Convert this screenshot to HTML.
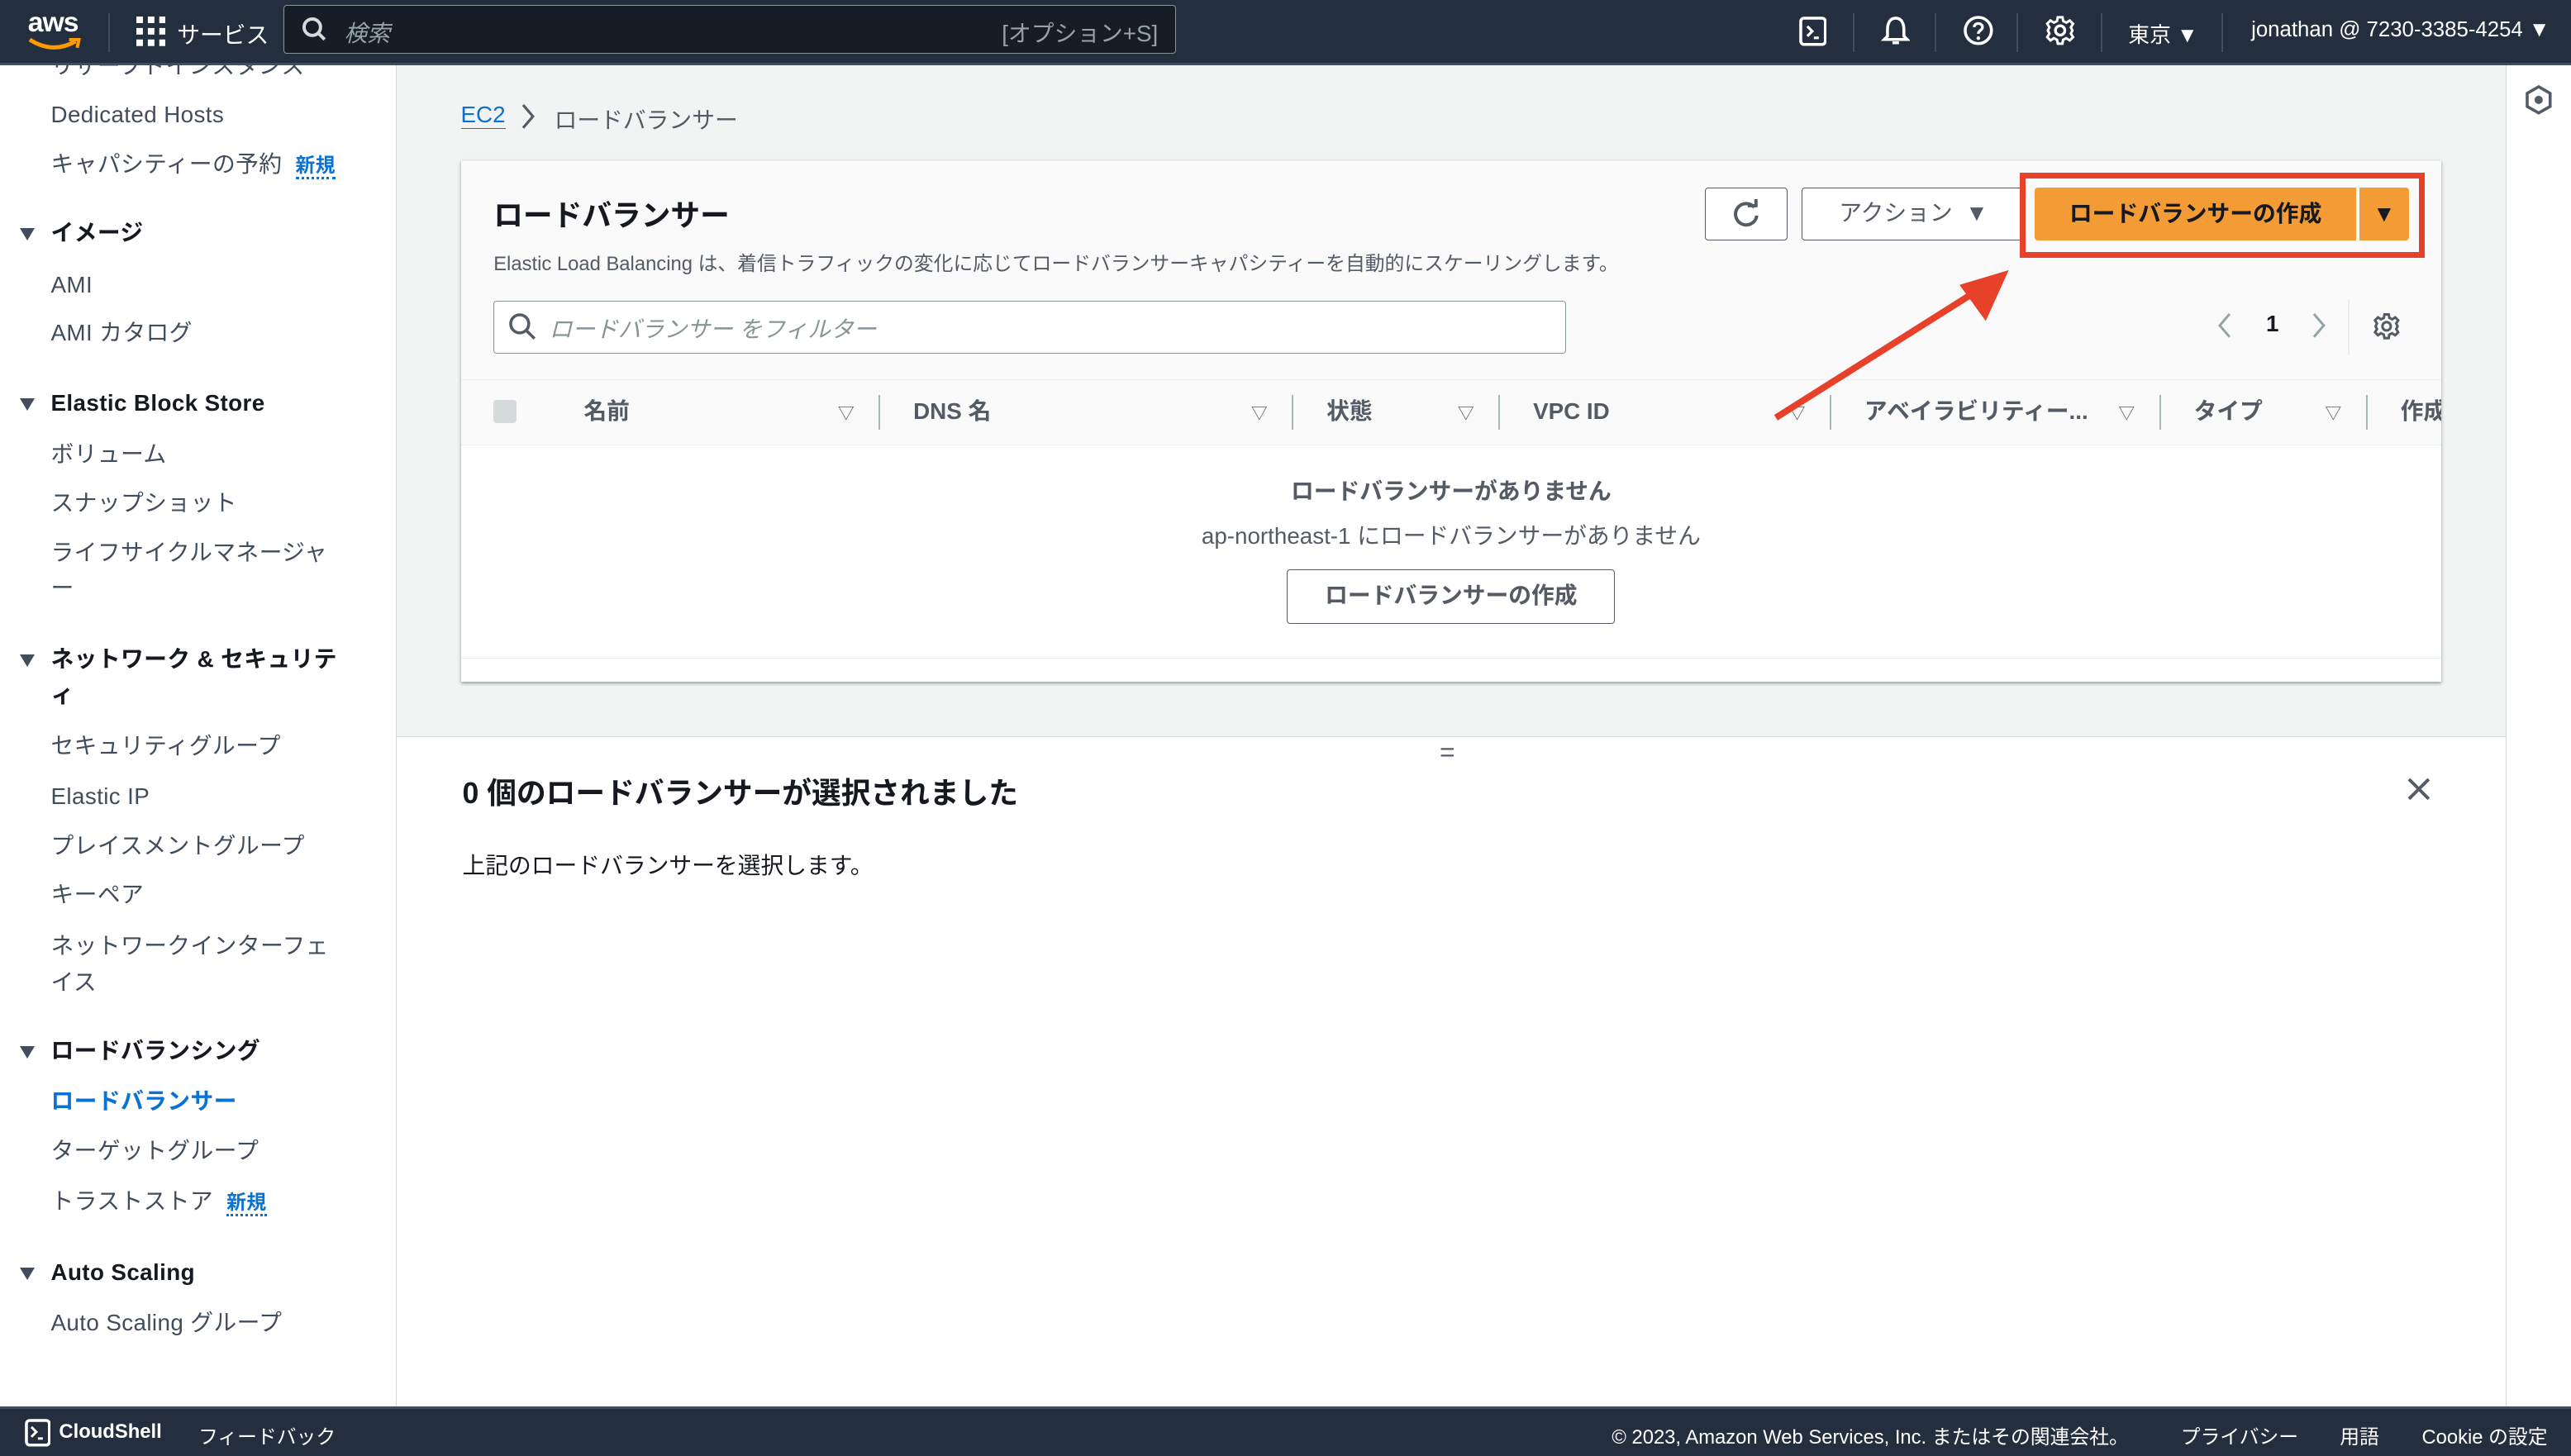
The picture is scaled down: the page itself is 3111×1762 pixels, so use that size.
<!DOCTYPE html>
<html><head><meta charset="utf-8">
<style>
html{zoom:1.98406}
*{box-sizing:border-box;margin:0;padding:0}
body{width:1568px;height:888px;overflow:hidden;position:relative;background:#fff;font-family:"Liberation Sans","Noto Sans CJK JP",sans-serif;color:#414d5c;font-size:14px}
.a{position:absolute;white-space:nowrap}
#top{position:absolute;left:0;top:0;width:1568px;height:40px;background:#232f3e;border-bottom:2px solid #414d5c}
#side{position:absolute;left:0;top:40px;width:242px;height:818px;background:#fff;border-right:1px solid #d5dbdb;overflow:hidden}
#side .a{font-size:14px;color:#414d5c;letter-spacing:0.2px;line-height:20px}
#side .h{font-weight:bold;color:#16191f}
#side .h:before{content:"";position:absolute;left:-19px;top:7px;border-left:5px solid transparent;border-right:5px solid transparent;border-top:8px solid #414d5c}
.new{color:#0972d3;font-size:12px;font-weight:bold;border-bottom:2px dotted #0972d3}
#main{position:absolute;left:242px;top:40px;width:1286px;height:409px;background:#f2f3f3}
#rail{position:absolute;left:1528px;top:40px;width:40px;height:818px;background:#fff;border-left:1px solid #d5dbdb}
#card{position:absolute;left:281px;top:98px;width:1208px;height:318px;background:#fafafa;border-top:1px solid #eaeded;box-shadow:0 1px 2px rgba(0,28,36,.4);overflow:hidden}
#lower{position:absolute;left:242px;top:449px;width:1286px;height:409px;background:#fff;border-top:1px solid #d5dbdb}
#foot{position:absolute;left:0;top:858px;width:1568px;height:30px;background:#232f3e;border-top:2px solid #414d5c;color:#fff;font-size:12px}
.btn{position:absolute;border:1px solid #545b64;background:#fff;border-radius:2px;font-weight:bold;color:#545b64;font-size:14px;text-align:center}
.th{position:absolute;top:0;height:38px;line-height:38px;font-weight:bold;color:#545b64;font-size:14px}
.sep{position:absolute;top:9px;width:1px;height:21px;background:#aab7b8}
.tri{position:absolute;top:12px;font-size:10px;color:#545b64}
</style></head><body>

<div id="top">
 <div class="a" style="left:17px;top:4px;color:#fff;font-size:17px;font-weight:bold;letter-spacing:-0.5px">aws</div>
 <svg class="a" style="left:16px;top:22px" width="34" height="10" viewBox="0 0 34 10"><path d="M2 2 Q16 11 30 3" stroke="#f90" stroke-width="2.5" fill="none"/><path d="M26 2 L32 2 L31 7" stroke="#f90" stroke-width="2" fill="none"/></svg>
 <div class="a" style="left:66px;top:8px;width:1px;height:24px;background:#414d5c"></div>
 <svg class="a" style="left:83px;top:10px" width="18" height="18"><g fill="#fff"><rect x="0" y="0" width="4" height="4"/><rect x="7" y="0" width="4" height="4"/><rect x="14" y="0" width="4" height="4"/><rect x="0" y="7" width="4" height="4"/><rect x="7" y="7" width="4" height="4"/><rect x="14" y="7" width="4" height="4"/><rect x="0" y="14" width="4" height="4"/><rect x="7" y="14" width="4" height="4"/><rect x="14" y="14" width="4" height="4"/></g></svg>
 <div class="a" style="left:108px;top:10px;color:#fff;font-size:14px">サービス</div>
 <div class="a" style="left:173px;top:3px;width:544px;height:30px;background:#161d26;border:1px solid #879596;border-radius:2px"></div>
 <svg class="a" style="left:184px;top:10px" width="16" height="16"><circle cx="6.5" cy="6.5" r="5" stroke="#d5dbdb" stroke-width="2" fill="none"/><path d="M10 10 L14 14" stroke="#d5dbdb" stroke-width="2"/></svg>
 <div class="a" style="left:210px;top:9px;color:#95a5a6;font-size:14px;font-style:italic">検索</div>
 <div class="a" style="left:611px;top:9px;color:#95a5a6;font-size:14px">[オプション+S]</div>
 <svg class="a" style="left:1097px;top:10px" width="17" height="18"><rect x="1" y="1" width="15" height="16" rx="2" stroke="#fff" stroke-width="1.8" fill="none"/><path d="M5 6 L8 9 L5 12 M9 13 H12" stroke="#fff" stroke-width="1.6" fill="none"/></svg>
 <div class="a" style="left:1130px;top:8px;width:1px;height:24px;background:#414d5c"></div>
 <svg class="a" style="left:1147px;top:9px" width="18" height="20"><path d="M9 2 C5 2 4 6 4 9 L4 13 L2 15 H16 L14 13 L14 9 C14 6 13 2 9 2Z M7 17 H11" stroke="#fff" stroke-width="1.8" fill="none"/></svg>
 <div class="a" style="left:1180px;top:8px;width:1px;height:24px;background:#414d5c"></div>
 <svg class="a" style="left:1197px;top:9px" width="19" height="19"><circle cx="9.5" cy="9.5" r="8" stroke="#fff" stroke-width="1.8" fill="none"/><path d="M7 7.5 C7 4.5 12 4.5 12 7.5 C12 9.5 9.5 9.5 9.5 11.5" stroke="#fff" stroke-width="1.7" fill="none"/><circle cx="9.5" cy="14.2" r="1.1" fill="#fff"/></svg>
 <div class="a" style="left:1230px;top:8px;width:1px;height:24px;background:#414d5c"></div>
 <svg class="a" style="left:1247px;top:9px" width="19" height="19" viewBox="0 0 20 20"><circle cx="10" cy="10" r="3" stroke="#fff" stroke-width="1.8" fill="none"/><path d="M8.5 1.5h3l.5 2.5 2 1 2.2-1.4 2.1 2.1L16.9 8l1 2-1 2 1.4 2.3-2.1 2.1-2.3-1.4-2 1-.4 2.5h-3L8 16l-2-1-2.2 1.4-2.1-2.1L3.1 12l-1-2 1-2L1.7 5.7l2.1-2.1L6 5l2-1z" stroke="#fff" stroke-width="1.6" fill="none"/></svg>
 <div class="a" style="left:1281px;top:8px;width:1px;height:24px;background:#414d5c"></div>
 <div class="a" style="left:1298px;top:11px;color:#fff;font-size:13px">東京 ▼</div>
 <div class="a" style="left:1355px;top:8px;width:1px;height:24px;background:#414d5c"></div>
 <div class="a" style="left:1373px;top:11px;color:#fff;font-size:13px">jonathan @ 7230-3385-4254 ▼</div>
</div>

<div id="side">
 <div class="a" style="left:31px;top:-10px">リザーブドインスタンス</div>
 <div class="a" style="left:31px;top:20px">Dedicated Hosts</div>
 <div class="a" style="left:31px;top:50px">キャパシティーの予約 <span class="new" style="margin-left:4px">新規</span></div>
 <div class="a h" style="left:31px;top:92px">イメージ</div>
 <div class="a" style="left:31px;top:124px">AMI</div>
 <div class="a" style="left:31px;top:153px">AMI カタログ</div>
 <div class="a h" style="left:31px;top:196px">Elastic Block Store</div>
 <div class="a" style="left:31px;top:227px">ボリューム</div>
 <div class="a" style="left:31px;top:257px">スナップショット</div>
 <div class="a" style="left:31px;top:287px">ライフサイクルマネージャ</div>
 <div class="a" style="left:31px;top:309px">ー</div>
 <div class="a h" style="left:31px;top:352px">ネットワーク &amp; セキュリテ</div>
 <div class="a" style="left:31px;top:374px;font-weight:bold;color:#16191f">ィ</div>
 <div class="a" style="left:31px;top:405px">セキュリティグループ</div>
 <div class="a" style="left:31px;top:436px">Elastic IP</div>
 <div class="a" style="left:31px;top:466px">プレイスメントグループ</div>
 <div class="a" style="left:31px;top:496px">キーペア</div>
 <div class="a" style="left:31px;top:527px">ネットワークインターフェ</div>
 <div class="a" style="left:31px;top:549px">イス</div>
 <div class="a h" style="left:31px;top:591px">ロードバランシング</div>
 <div class="a" style="left:31px;top:622px;color:#0972d3;font-weight:bold">ロードバランサー</div>
 <div class="a" style="left:31px;top:652px">ターゲットグループ</div>
 <div class="a" style="left:31px;top:683px">トラストストア <span class="new" style="margin-left:4px">新規</span></div>
 <div class="a h" style="left:31px;top:726px">Auto Scaling</div>
 <div class="a" style="left:31px;top:757px">Auto Scaling グループ</div>
</div>

<div id="main">
 <div class="a" style="left:39px;top:22px;color:#0972d3;font-size:14px;border-bottom:1px solid #0972d3">EC2</div>
 <svg class="a" style="left:75px;top:23px" width="10" height="16"><path d="M2 1 L8 8 L2 15" stroke="#545b64" stroke-width="1.6" fill="none"/></svg>
 <div class="a" style="left:96px;top:22px;color:#545b64;font-size:14px">ロードバランサー</div>
</div>

<div id="card">
 <div class="a" style="left:20px;top:19px;font-size:18px;font-weight:bold;color:#16191f">ロードバランサー</div>
 <div class="a" style="left:20px;top:52px;font-size:12px;color:#545b64">Elastic Load Balancing は、着信トラフィックの変化に応じてロードバランサーキャパシティーを自動的にスケーリングします。</div>
 <div class="btn" style="left:759px;top:16px;width:50px;height:32px"></div>
 <svg class="a" style="left:775px;top:23px" width="18" height="18"><path d="M14 5 A6.5 6.5 0 1 0 15.5 10" stroke="#545b64" stroke-width="2" fill="none"/><path d="M10 4 H15 V-1" stroke="#545b64" stroke-width="2" fill="none"/></svg>
 <div class="btn" style="left:818px;top:16px;width:136px;height:32px;line-height:30px;font-weight:normal">アクション &nbsp;▼</div>
 <div class="a" style="left:951px;top:7px;width:247px;height:52px;border:4px solid #e8412a"></div>
 <div class="a" style="left:960px;top:16px;width:196px;height:32px;background:#f39c36;border-radius:2px 0 0 2px;color:#16191f;font-weight:bold;text-align:center;line-height:32px">ロードバランサーの作成</div>
 <div class="a" style="left:1158px;top:16px;width:30px;height:32px;background:#f39c36;border-radius:0 2px 2px 0;color:#16191f;text-align:center;line-height:32px;font-size:14px">▼</div>
 <div class="a" style="left:20px;top:85px;width:654px;height:32px;border:1px solid #879596;background:#fff;border-radius:2px"></div>
 <svg class="a" style="left:29px;top:92px" width="18" height="18"><circle cx="7" cy="7" r="5.5" stroke="#545b64" stroke-width="1.8" fill="none"/><path d="M11 11 L16 16" stroke="#545b64" stroke-width="1.8"/></svg>
 <div class="a" style="left:54px;top:91px;color:#879596;font-style:italic">ロードバランサー をフィルター</div>
 <svg class="a" style="left:1071px;top:92px" width="10" height="16"><path d="M8 1 L2 8 L8 15" stroke="#95a5a6" stroke-width="1.5" fill="none"/></svg>
 <div class="a" style="left:1101px;top:91px;font-weight:bold;color:#16191f">1</div>
 <svg class="a" style="left:1128px;top:92px" width="10" height="16"><path d="M2 1 L8 8 L2 15" stroke="#95a5a6" stroke-width="1.5" fill="none"/></svg>
 <div class="a" style="left:1151px;top:84px;width:1px;height:34px;background:#eaeded"></div>
 <svg class="a" style="left:1166px;top:92px" width="17" height="17" viewBox="0 0 20 20"><circle cx="10" cy="10" r="3" stroke="#545b64" stroke-width="1.8" fill="none"/><path d="M8.5 1.5h3l.5 2.5 2 1 2.2-1.4 2.1 2.1L16.9 8l1 2-1 2 1.4 2.3-2.1 2.1-2.3-1.4-2 1-.4 2.5h-3L8 16l-2-1-2.2 1.4-2.1-2.1L3.1 12l-1-2 1-2L1.7 5.7l2.1-2.1L6 5l2-1z" stroke="#545b64" stroke-width="1.8" fill="none"/></svg>
 <div class="a" style="left:0;top:133px;width:1208px;height:40px;background:#fafafa;border-top:1px solid #eaeded;border-bottom:1px solid #eaeded">
  <div class="a" style="left:20px;top:12px;width:14px;height:14px;background:#d5dbdb;border-radius:2px"></div>
  <div class="th" style="left:75px">名前</div><div class="tri" style="left:230px">▽</div><div class="sep" style="left:255px"></div>
  <div class="th" style="left:276px">DNS 名</div><div class="tri" style="left:482px">▽</div><div class="sep" style="left:507px"></div>
  <div class="th" style="left:528px">状態</div><div class="tri" style="left:608px">▽</div><div class="sep" style="left:633px"></div>
  <div class="th" style="left:654px">VPC ID</div><div class="tri" style="left:810px">▽</div><div class="sep" style="left:835px"></div>
  <div class="th" style="left:856px">アベイラビリティー...</div><div class="tri" style="left:1011px">▽</div><div class="sep" style="left:1036px"></div>
  <div class="th" style="left:1057px">タイプ</div><div class="tri" style="left:1137px">▽</div><div class="sep" style="left:1162px"></div>
  <div class="th" style="left:1183px">作成</div>
 </div>
 <div class="a" style="left:0;top:173px;width:1208px;height:130px;background:#fff;border-bottom:1px solid #eaeded"></div>
 <div class="a" style="left:0;top:190px;width:1208px;text-align:center;font-weight:bold;color:#545b64">ロードバランサーがありません</div>
 <div class="a" style="left:0;top:217px;width:1208px;text-align:center;color:#545b64">ap-northeast-1 にロードバランサーがありません</div>
 <div class="btn" style="left:504px;top:249px;width:200px;height:33px;line-height:31px">ロードバランサーの作成</div>
 <div class="a" style="left:0;top:303px;width:1208px;height:15px;background:#fff"></div>
</div>

<svg class="a" style="left:1075px;top:160px" width="160" height="100"><path d="M8 95 L130 18" stroke="#e8412a" stroke-width="4"/><path d="M150 5 L120 14 L136 36 Z" fill="#e8412a"/></svg>

<div id="lower">
 <div class="a" style="left:636px;top:0px;font-size:16px;color:#545b64">=</div>
 <div class="a" style="left:40px;top:20px;font-size:18px;font-weight:bold;color:#16191f">0 個のロードバランサーが選択されました</div>
 <svg class="a" style="left:1225px;top:24px" width="16" height="16"><path d="M2 2 L14 14 M14 2 L2 14" stroke="#545b64" stroke-width="2"/></svg>
 <div class="a" style="left:40px;top:67px;color:#16191f;font-size:14px">上記のロードバランサーを選択します。</div>
</div>

<div id="rail">
 <svg class="a" style="left:12px;top:12px" width="16" height="18"><path d="M8 1 L15 5 V13 L8 17 L1 13 V5 Z" stroke="#545b64" stroke-width="1.8" fill="none"/><circle cx="8" cy="9" r="2.5" fill="#545b64"/></svg>
</div>

<div id="foot">
 <svg class="a" style="left:15px;top:6px" width="16" height="17"><rect x="1" y="1" width="14" height="15" rx="2" stroke="#fff" stroke-width="1.8" fill="none"/><path d="M4 5 L7 8 L4 11 M8 12 H11" stroke="#fff" stroke-width="1.5" fill="none"/></svg>
 <div class="a" style="left:36px;top:7px;font-weight:bold">CloudShell</div>
 <div class="a" style="left:121px;top:7px">フィードバック</div>
 <div class="a" style="left:983px;top:7px">© 2023, Amazon Web Services, Inc. またはその関連会社。</div>
 <div class="a" style="left:1330px;top:7px">プライバシー</div>
 <div class="a" style="left:1427px;top:7px">用語</div>
 <div class="a" style="left:1477px;top:7px">Cookie の設定</div>
</div>
</body></html>
